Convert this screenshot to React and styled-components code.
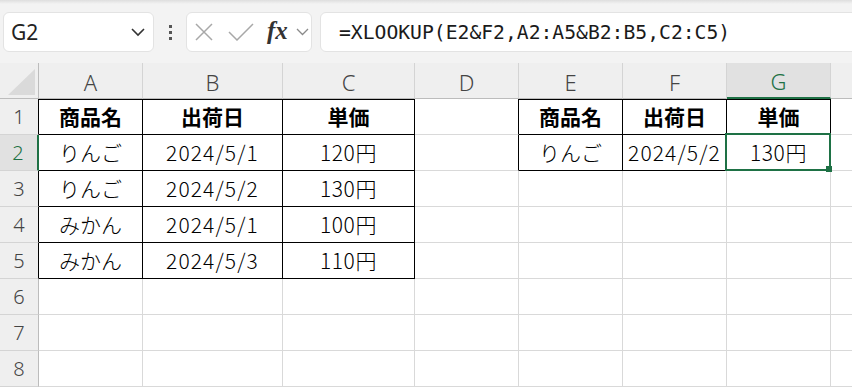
import React from "react"
import styled, { createGlobalStyle } from "styled-components"

const GlobalStyle = createGlobalStyle`
  body {
    margin: 0;
    background: #ffffff;
    overflow: hidden;
  }
`

// H only shows a sliver at the right edge, so its letter is off screen
const COLS = ["A", "B", "C", "D", "E", "F", "G", ""]
const WIDTHS = [39, 104, 140, 132, 104, 104, 104, 104, 30]
const ROWS = 8

const DATA = {
  1: { 1: "商品名", 2: "出荷日", 3: "単価", 5: "商品名", 6: "出荷日", 7: "単価" },
  2: { 1: "りんご", 2: "2024/5/1", 3: "120円", 5: "りんご", 6: "2024/5/2", 7: "130円" },
  3: { 1: "りんご", 2: "2024/5/2", 3: "130円" },
  4: { 1: "みかん", 2: "2024/5/1", 3: "100円" },
  5: { 1: "みかん", 2: "2024/5/3", 3: "110円" },
}

const inTable = (r, c) =>
  (r >= 1 && r <= 5 && c >= 1 && c <= 3) || (r >= 1 && r <= 2 && c >= 5 && c <= 7)

const spacingFor = (v) => {
  if (!v) return "0"
  if (v.includes("/")) return "1.1px"
  if (v.endsWith("円")) return "0.6px"
  return "0"
}

const GRID = "#d9d9d9"
const GREEN = "#1e7145"

export default function App() {
  const cells = []

  cells.push(<Corner key="corner"><CornerTriangle /></Corner>)
  COLS.forEach((name, i) => {
    const c = i + 1
    cells.push(
      <ColHeader key={"h" + c} $active={c === 7}>
        {name}
      </ColHeader>
    )
  })

  for (let r = 1; r <= ROWS; r++) {
    cells.push(
      <RowHeader key={"r" + r} $active={r === 2} $edge={inTable(r, 1)}>
        {r}
      </RowHeader>
    )
    COLS.forEach((name, i) => {
      const c = i + 1
      const value = DATA[r] && DATA[r][c]
      const selected = r === 2 && c === 7
      cells.push(
        <Cell
          key={c + "-" + r}
          $right={inTable(r, c) || inTable(r, c + 1) ? "#000" : GRID}
          $bottom={inTable(r, c) || inTable(r + 1, c) ? "#000" : GRID}
          $top={r === 1 && inTable(r, c)}
          $bold={r === 1}
          $spacing={spacingFor(value)}
        >
          {value}
          {selected && (
            <>
              <Selection />
              <Handle />
            </>
          )}
        </Cell>
      )
    })
  }

  return (
    <>
      <GlobalStyle />
      <Page>
        <Toolbar>
          <NameBox>
            <NameText>G2</NameText>
            <svg width="16" height="10" viewBox="0 0 16 10">
              <path d="M2 2 L8 8 L14 2" fill="none" stroke="#333" strokeWidth="1.6" />
            </svg>
          </NameBox>
          <Dots>
            <Dot />
            <Dot />
            <Dot />
          </Dots>
          <FxBox>
            <svg width="20" height="20" viewBox="0 0 20 20">
              <path d="M2 2 L18 18 M18 2 L2 18" stroke="#a8a8a8" strokeWidth="1.5" fill="none" />
            </svg>
            <svg width="26" height="18" viewBox="0 0 26 18">
              <path d="M1 9 L9 17 L25 1" stroke="#a8a8a8" strokeWidth="1.5" fill="none" />
            </svg>
            <FxLabel>fx</FxLabel>
            <svg width="13" height="8" viewBox="0 0 13 8">
              <path d="M1 1 L6.5 6.5 L12 1" fill="none" stroke="#8a8a8a" strokeWidth="1.3" />
            </svg>
          </FxBox>
          <FormulaBox>=XLOOKUP(E2&amp;F2,A2:A5&amp;B2:B5,C2:C5)</FormulaBox>
        </Toolbar>
        <Sheet>{cells}</Sheet>
      </Page>
    </>
  )
}

const Page = styled.div`
  width: 852px;
  height: 387px;
  overflow: hidden;
  display: flex;
  flex-direction: column;
`

const Toolbar = styled.div`
  height: 63px;
  flex-shrink: 0;
  display: flex;
  align-items: center;
  padding: 1px 0 0 3px;
  box-sizing: border-box;
  background: linear-gradient(#dedede 0px, #f3f3f3 4px, #f3f3f3 100%);
`

const NameBox = styled.div`
  width: 151px;
  height: 40px;
  box-sizing: border-box;
  background: #ffffff;
  border: 1px solid #e3e3e3;
  border-radius: 6px;
  display: flex;
  align-items: center;
  justify-content: space-between;
  padding: 0 7px 0 7px;
`

const NameText = styled.span`
  font-family: "Noto Sans", "Noto Sans CJK JP", sans-serif;
  font-size: 21px;
  color: #222;
`

const Dots = styled.div`
  width: 32px;
  display: flex;
  flex-direction: column;
  align-items: center;
  gap: 3px;
`

const Dot = styled.div`
  width: 3px;
  height: 3px;
  background: #555;
`

const FxBox = styled.div`
  width: 126px;
  height: 40px;
  box-sizing: border-box;
  background: #ffffff;
  border: 1px solid #e3e3e3;
  border-radius: 6px;
  display: flex;
  align-items: center;
  padding: 0 0 0 7px;

  & > svg:nth-child(2) {
    margin-left: 14px;
  }
  & > svg:nth-child(4) {
    margin-left: 8px;
  }
`

const FxLabel = styled.span`
  font-family: "Liberation Serif", "DejaVu Serif", serif;
  font-style: italic;
  font-weight: 700;
  font-size: 25px;
  color: #333;
  margin-left: 13px;
  line-height: 1;
  margin-top: -4px;
`

const FormulaBox = styled.div`
  flex: 1;
  height: 40px;
  margin-left: 8px;
  margin-right: -10px;
  box-sizing: border-box;
  background: #ffffff;
  border: 1px solid #e3e3e3;
  border-radius: 6px;
  display: flex;
  align-items: center;
  padding-left: 18px;
  font-family: "DejaVu Sans Mono", "Liberation Mono", monospace;
  font-size: 19.7px;
  color: #1a1a1a;
  white-space: nowrap;
`

const Sheet = styled.div`
  display: grid;
  grid-template-columns: ${WIDTHS.map((w) => w + "px").join(" ")};
  grid-auto-rows: 36px;
  background: #ffffff;
`

const Corner = styled.div`
  background: #efefef;
  border-right: 1px solid #bcbcbc;
  border-bottom: 1px solid #bcbcbc;
  box-sizing: border-box;
  display: flex;
  align-items: flex-end;
  justify-content: flex-end;
  padding: 0 3px 3px 0;
`

const CornerTriangle = styled.div`
  width: 0;
  height: 0;
  border-left: 27px solid transparent;
  border-bottom: 26px solid #dadada;
`

const ColHeader = styled.div`
  box-sizing: border-box;
  background: ${(p) => (p.$active ? "#e1e1e1" : "#efefef")};
  color: ${(p) => (p.$active ? GREEN : "#444")};
  border-right: 1px solid #d4d4d4;
  border-bottom: ${(p) => (p.$active ? `2px solid ${GREEN}` : "1px solid #bcbcbc")};
  display: flex;
  align-items: center;
  justify-content: center;
  font-family: "Noto Sans", sans-serif;
  font-weight: 300;
  font-size: 22px;
  padding-top: 2px;
`

const RowHeader = styled.div`
  box-sizing: border-box;
  background: ${(p) => (p.$active ? "#e1e1e1" : "#efefef")};
  color: ${(p) => (p.$active ? GREEN : "#444")};
  border-right: ${(p) =>
    p.$active ? `2px solid ${GREEN}` : `1px solid ${p.$edge ? "#000" : "#bcbcbc"}`};
  border-bottom: 1px solid #d4d4d4;
  display: flex;
  align-items: center;
  justify-content: center;
  font-family: "Noto Sans", sans-serif;
  font-weight: 300;
  font-size: 20px;
  padding-right: ${(p) => (p.$active ? "1px" : "0")};
`

const Cell = styled.div`
  position: relative;
  box-sizing: border-box;
  border-right: 1px solid ${(p) => p.$right};
  border-bottom: 1px solid ${(p) => p.$bottom};
  box-shadow: ${(p) => (p.$top ? "inset 0 1px 0 #000" : "none")};
  display: flex;
  align-items: center;
  justify-content: center;
  font-family: "Noto Sans CJK JP", sans-serif;
  font-size: 21px;
  font-weight: ${(p) => (p.$bold ? 700 : 300)};
  letter-spacing: ${(p) => p.$spacing};
  color: #000;
  white-space: nowrap;
  padding-bottom: 2px;
`

const Selection = styled.div`
  position: absolute;
  top: -2px;
  left: -2px;
  right: -1px;
  bottom: -1px;
  border: 2px solid ${GREEN};
  pointer-events: none;
  z-index: 2;
`

const Handle = styled.div`
  position: absolute;
  right: -2px;
  bottom: -2px;
  width: 6px;
  height: 6px;
  background: ${GREEN};
  z-index: 3;
`
